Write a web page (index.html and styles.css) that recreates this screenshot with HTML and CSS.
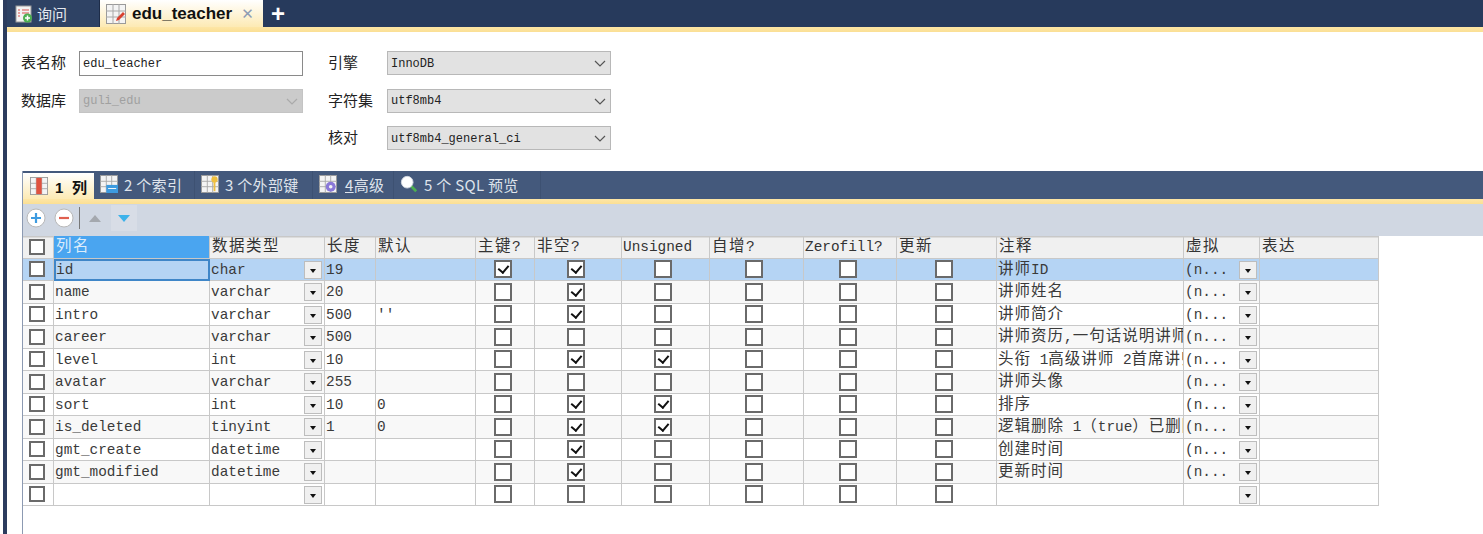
FILE: index.html
```html
<!DOCTYPE html>
<html lang="zh">
<head>
<meta charset="utf-8">
<title>edu_teacher</title>
<link rel="stylesheet" href="styles.css">
</head>
<body>
<svg class="defs" width="0" height="0">
  <symbol id="tbl" viewBox="0 0 20 20">
    <rect x="0.5" y="0.5" width="19" height="19" fill="#f4f4f4" stroke="#9a9a9a"/>
    <path d="M0 7h20M0 13h20M7 0v20M13 0v20" stroke="#a8a8a8" fill="none"/>
  </symbol>
</svg>
<div class="window">
  <div class="tabs">
    <div class="tab">
      <svg class="ic" viewBox="0 0 18 18"><rect x="1" y="1" width="15" height="16" fill="#f2f2f2" stroke="#999"/><path d="M3 5h2M7 5h7M3 8h2M7 8h7M3 11h2" stroke="#d9534f" fill="none"/><circle cx="12.5" cy="13" r="4.5" fill="#4caf50"/><path d="M12.5 10.500v5M10 13h5" stroke="#fff" stroke-width="1.500"/></svg>
      <span>询问</span>
    </div>
    <div class="tab active">
      <svg class="ic wide" viewBox="0 0 20 20"><use href="#tbl"/><path d="M10 17l1-3 6-6 2 2-6 6z" fill="#d8402f"/></svg>
      <span class="tab-name">edu_teacher</span>
      <span class="tab-x">✕</span>
    </div>
    <div class="tab-add">+</div>
  </div>
  <div class="strip"></div>

  <div class="form">
    <label>表名称</label>
    <div class="input">edu_teacher</div>
    <label class="l2">引擎</label>
    <div class="select">InnoDB<svg class="chev" viewBox="0 0 12 7"><path d="M1 1l5 5 5-5" fill="none" stroke="#555" stroke-width="1.200"/></svg></div>
    <label>数据库</label>
    <div class="select off">guli_edu<svg class="chev" viewBox="0 0 12 7"><path d="M1 1l5 5 5-5" fill="none" stroke="#aaa" stroke-width="1.200"/></svg></div>
    <label class="l2">字符集</label>
    <div class="select">utf8mb4<svg class="chev" viewBox="0 0 12 7"><path d="M1 1l5 5 5-5" fill="none" stroke="#555" stroke-width="1.200"/></svg></div>
    <span></span><span></span>
    <label class="l2">核对</label>
    <div class="select">utf8mb4_general_ci<svg class="chev" viewBox="0 0 12 7"><path d="M1 1l5 5 5-5" fill="none" stroke="#555" stroke-width="1.200"/></svg></div>
  </div>

  <div class="panel">
    <div class="ptabs">
      <div class="ptab active">
        <svg class="pic" viewBox="0 0 20 20"><use href="#tbl"/><rect x="7" y="1" width="6" height="18" fill="#e0523f"/></svg>
        <b>1 列</b>
      </div>
      <div class="ptab">
        <svg class="pic" viewBox="0 0 20 20"><use href="#tbl"/><rect x="7" y="11" width="13" height="9" fill="#3d9be0"/><path d="M9 15h9" stroke="#fff"/></svg>
        <span>2 个索引</span>
      </div>
      <div class="ptab">
        <svg class="pic" viewBox="0 0 20 20"><use href="#tbl"/><circle cx="15" cy="5" r="3.500" fill="#f0c040"/><path d="M15 8v10" stroke="#f0c040" stroke-width="2"/></svg>
        <span>3 个外部键</span>
      </div>
      <div class="ptab">
        <svg class="pic" viewBox="0 0 20 20"><use href="#tbl"/><circle cx="13" cy="13" r="5.500" fill="#8a78d8"/><circle cx="13" cy="13" r="2" fill="#f4f4f4"/></svg>
        <span><u>4</u>高级</span>
      </div>
      <div class="ptab">
        <svg class="pic" viewBox="0 0 20 20"><path d="M12 12l6 6" stroke="#4caf50" stroke-width="3"/><circle cx="8" cy="8" r="6.500" fill="#fff"/><circle cx="8" cy="8" r="6.500" fill="none" stroke="#cfd6e0"/></svg>
        <span>5 个 SQL 预览</span>
      </div>
    </div>
    <div class="strip small"></div>
    <div class="tools">
      <svg class="tool" viewBox="0 0 20 20"><circle cx="10" cy="10" r="9" fill="#fff" stroke="#b8b8b8"/><path d="M10 5v10M5 10h10" stroke="#3d9be0" stroke-width="2.200"/></svg>
      <svg class="tool" viewBox="0 0 20 20"><circle cx="10" cy="10" r="9" fill="#fff" stroke="#b8b8b8"/><path d="M5 10h10" stroke="#e0604f" stroke-width="2.200"/></svg>
      <span class="sep"></span>
      <span class="tbtn"><span class="up"></span></span>
      <span class="tbtn shade"><span class="down"></span></span>
    </div>
    <div class="grid">
      <div class="row head">
        <div class="c"><span class="cb"></span></div>
        <div class="t zh sel-h">列名</div><div class="t zh">数据类型</div><div class="t zh">长度</div><div class="t zh">默认</div>
        <div class="t zh">主键<span class="en">?</span></div><div class="t zh">非空<span class="en">?</span></div><div class="t">Unsigned</div><div class="t zh">自增<span class="en">?</span></div><div class="t">Zerofill?</div><div class="t zh">更新</div><div class="t zh">注释</div><div class="t zh">虚拟</div><div class="t zh">表达</div>
      </div>
      <div class="row cur">
        <div class="c"><span class="cb"></span></div>
        <div class="t focus">id</div><div class="t dd">char<i></i></div><div class="t">19</div><div class="t"></div>
        <div class="c"><span class="cb on"></span></div><div class="c"><span class="cb on"></span></div><div class="c"><span class="cb"></span></div><div class="c"><span class="cb"></span></div><div class="c"><span class="cb"></span></div><div class="c"><span class="cb"></span></div>
        <div class="t zh">讲师<span class="en">ID</span></div><div class="t dd">(n...<i></i></div><div class="t"></div>
      </div>
      <div class="row alt">
        <div class="c"><span class="cb"></span></div>
        <div class="t">name</div><div class="t dd">varchar<i></i></div><div class="t">20</div><div class="t"></div>
        <div class="c"><span class="cb"></span></div><div class="c"><span class="cb on"></span></div><div class="c"><span class="cb"></span></div><div class="c"><span class="cb"></span></div><div class="c"><span class="cb"></span></div><div class="c"><span class="cb"></span></div>
        <div class="t zh">讲师姓名</div><div class="t dd">(n...<i></i></div><div class="t"></div>
      </div>
      <div class="row">
        <div class="c"><span class="cb"></span></div>
        <div class="t">intro</div><div class="t dd">varchar<i></i></div><div class="t">500</div><div class="t">''</div>
        <div class="c"><span class="cb"></span></div><div class="c"><span class="cb on"></span></div><div class="c"><span class="cb"></span></div><div class="c"><span class="cb"></span></div><div class="c"><span class="cb"></span></div><div class="c"><span class="cb"></span></div>
        <div class="t zh">讲师简介</div><div class="t dd">(n...<i></i></div><div class="t"></div>
      </div>
      <div class="row alt">
        <div class="c"><span class="cb"></span></div>
        <div class="t">career</div><div class="t dd">varchar<i></i></div><div class="t">500</div><div class="t"></div>
        <div class="c"><span class="cb"></span></div><div class="c"><span class="cb"></span></div><div class="c"><span class="cb"></span></div><div class="c"><span class="cb"></span></div><div class="c"><span class="cb"></span></div><div class="c"><span class="cb"></span></div>
        <div class="t zh">讲师资历<span class="en">,</span>一句话说明讲师</div><div class="t dd">(n...<i></i></div><div class="t"></div>
      </div>
      <div class="row">
        <div class="c"><span class="cb"></span></div>
        <div class="t">level</div><div class="t dd">int<i></i></div><div class="t">10</div><div class="t"></div>
        <div class="c"><span class="cb"></span></div><div class="c"><span class="cb on"></span></div><div class="c"><span class="cb on"></span></div><div class="c"><span class="cb"></span></div><div class="c"><span class="cb"></span></div><div class="c"><span class="cb"></span></div>
        <div class="t zh">头衔<span class="en"> 1</span>高级讲师<span class="en"> 2</span>首席讲师</div><div class="t dd">(n...<i></i></div><div class="t"></div>
      </div>
      <div class="row alt">
        <div class="c"><span class="cb"></span></div>
        <div class="t">avatar</div><div class="t dd">varchar<i></i></div><div class="t">255</div><div class="t"></div>
        <div class="c"><span class="cb"></span></div><div class="c"><span class="cb"></span></div><div class="c"><span class="cb"></span></div><div class="c"><span class="cb"></span></div><div class="c"><span class="cb"></span></div><div class="c"><span class="cb"></span></div>
        <div class="t zh">讲师头像</div><div class="t dd">(n...<i></i></div><div class="t"></div>
      </div>
      <div class="row">
        <div class="c"><span class="cb"></span></div>
        <div class="t">sort</div><div class="t dd">int<i></i></div><div class="t">10</div><div class="t">0</div>
        <div class="c"><span class="cb"></span></div><div class="c"><span class="cb on"></span></div><div class="c"><span class="cb on"></span></div><div class="c"><span class="cb"></span></div><div class="c"><span class="cb"></span></div><div class="c"><span class="cb"></span></div>
        <div class="t zh">排序</div><div class="t dd">(n...<i></i></div><div class="t"></div>
      </div>
      <div class="row alt">
        <div class="c"><span class="cb"></span></div>
        <div class="t">is_deleted</div><div class="t dd">tinyint<i></i></div><div class="t">1</div><div class="t">0</div>
        <div class="c"><span class="cb"></span></div><div class="c"><span class="cb on"></span></div><div class="c"><span class="cb on"></span></div><div class="c"><span class="cb"></span></div><div class="c"><span class="cb"></span></div><div class="c"><span class="cb"></span></div>
        <div class="t zh">逻辑删除<span class="en"> 1</span>（<span class="en">true</span>）已删除</div><div class="t dd">(n...<i></i></div><div class="t"></div>
      </div>
      <div class="row">
        <div class="c"><span class="cb"></span></div>
        <div class="t">gmt_create</div><div class="t dd">datetime<i></i></div><div class="t"></div><div class="t"></div>
        <div class="c"><span class="cb"></span></div><div class="c"><span class="cb on"></span></div><div class="c"><span class="cb"></span></div><div class="c"><span class="cb"></span></div><div class="c"><span class="cb"></span></div><div class="c"><span class="cb"></span></div>
        <div class="t zh">创建时间</div><div class="t dd">(n...<i></i></div><div class="t"></div>
      </div>
      <div class="row alt">
        <div class="c"><span class="cb"></span></div>
        <div class="t">gmt_modified</div><div class="t dd">datetime<i></i></div><div class="t"></div><div class="t"></div>
        <div class="c"><span class="cb"></span></div><div class="c"><span class="cb on"></span></div><div class="c"><span class="cb"></span></div><div class="c"><span class="cb"></span></div><div class="c"><span class="cb"></span></div><div class="c"><span class="cb"></span></div>
        <div class="t zh">更新时间</div><div class="t dd">(n...<i></i></div><div class="t"></div>
      </div>
      <div class="row">
        <div class="c"><span class="cb"></span></div>
        <div class="t"></div><div class="t dd"><i></i></div><div class="t"></div><div class="t"></div>
        <div class="c"><span class="cb"></span></div><div class="c"><span class="cb"></span></div><div class="c"><span class="cb"></span></div><div class="c"><span class="cb"></span></div><div class="c"><span class="cb"></span></div><div class="c"><span class="cb"></span></div>
        <div class="t"></div><div class="t dd"><i></i></div><div class="t"></div>
      </div>
    </div>
  </div>
</div>
</body>
</html>
```

FILE: styles.css
```css
* { box-sizing: border-box; }
html, body { margin: 0; height: 100%; }
body {
  width: 1483px; height: 534px; overflow: hidden; background: #fff;
  padding-left: 3px;
  font-family: "Liberation Mono", "Noto Sans CJK SC", monospace;
  color: #333;
}
.defs { display: block; height: 0; }
.window {
  height: 534px; border-left: 4px solid #2c3c5e; background: #fff; overflow: hidden;
}
.tabs {
  display: flex; height: 27px; background: #273a5c; align-items: flex-end;
  font-family: "Noto Sans CJK SC", "Liberation Sans", sans-serif;
}
.tab {
  display: flex; align-items: center; gap: 4px; height: 27px; padding-left: 8px; width: 93px;
  color: #e4e8ee; font-size: 15px; background: #2e4264; border-right: 1px solid #1d2c48;
}
.tab.active {
  width: 163px; padding-left: 6px; gap: 6px; color: #111; border: 0;
  background: linear-gradient(#ffffff, #fdeab4);
}
.ic { width: 18px; height: 18px; flex: none; }
.ic.wide { width: 20px; height: 20px; }
.tab-name { font: bold 17px "Liberation Sans", sans-serif; }
.tab-x { color: #8f9cb4; font: bold 15px "DejaVu Sans", sans-serif; margin-left: 3px; }
.tab-add { color: #fff; font: bold 24px/27px "Liberation Sans", sans-serif; margin-left: 8px; }
.strip { height: 5px; background: linear-gradient(#fde6a6, #fbdf94); }
.form {
  display: grid; margin: 19px 0 0 14px;
  grid-template-columns: 58px 224px 25px 59px 224px;
  grid-template-rows: repeat(3, 24px); row-gap: 13.5px; align-items: center;
}
.form label { font: 15px/22px "Noto Sans CJK SC", sans-serif; color: #222; grid-column: 1; margin-bottom: 2px; }
.form .l2 { grid-column: 4; }
.input, .select {
  height: 24px; font-size: 12px; line-height: 22px; padding: 1px 0 0 3px; color: #222;
  border: 1px solid #a8a8a8; display: flex; align-items: center; justify-content: space-between;
}
.input { background: #fff; grid-column: 2; height: 25px; border-color: #8a8a8a; }
.select { background: #e2e2e2; padding-right: 4px; border-color: #b8b8b8; }
.form .select:not(.off) { grid-column: 5; }
.select.off { background: #cbcbcb; color: #a0a0a0; border-color: #c4c4c4; grid-column: 2; }
.chev { width: 12px; height: 7px; }
.panel {
  margin: 21px 0 0 15px; border-left: 1px solid #8c9ab2; height: 400px;
}
.ptabs {
  display: grid; grid-template-columns: 71px 101px 118px 81px 147px; height: 28px; background: #44597c;
  font: 15px "Noto Sans CJK SC", "Liberation Sans", sans-serif; color: #dfe4ec; letter-spacing: .3px;
}
.ptab {
  display: flex; align-items: center; gap: 6px; padding: 0 0 2px 6px; white-space: nowrap;
  border-right: 1px solid #3d5172;
}
.ptab:nth-child(4) { gap: 8px; }
.ptab.active {
  background: linear-gradient(#ffffff, #fdeab4); color: #111; margin-top: 2px; border: 0; padding: 0 0 0 7px; gap: 7px;
}
.ptab.active b { font-family: "Liberation Sans", "Noto Sans CJK SC", sans-serif; word-spacing: 4px; }
.pic { width: 18px; height: 18px; flex: none; }
.strip.small { height: 5px; }
.tools {
  display: flex; align-items: center; height: 32px; background: #d0d7e2; padding: 0 0 4px 3px; gap: 8px;
}
.tool { width: 20px; height: 20px; flex: none; }
.sep { width: 1px; height: 22px; background: #777; margin-left: -3px; }
.tbtn { display: flex; width: 26px; height: 26px; align-items: center; justify-content: center; margin-left: -6px; }
.tbtn.shade { background: #d8dde6; margin-left: -5px; }
.up, .down { width: 0; height: 0; border: 6px solid transparent; }
.up { border-bottom: 7px solid #a4a8ae; border-top: 0; }
.down { border-top: 7px solid #3db2ea; border-bottom: 0; }
.row {
  display: grid; height: 22.5px;
  grid-template-columns: 31px 156px 115px 51px 100px 59px 87px 88px 94px 93px 100px 187px 76px 119px;
  width: 1356px; font-size: 14.4px; line-height: 23px; background: #fff;
  box-shadow: inset -1px 0 0 #c4c4c4;
}
.alt { background: #f8f8f8; }
.cur { background: #b5d4f4; }
.head { background: #f0f0f0; box-shadow: inset 0 1.5px 0 #c8c8c8; }
.row > div { border-right: 1.5px solid #c8c8c8; border-bottom: 1.5px solid #c8c8c8; min-width: 0; }
.t { padding-left: 1px; white-space: nowrap; overflow: hidden; position: relative; color: #3a3a3a; }
.zh { font-size: 15.5px; letter-spacing: 1px; }
.head .zh { letter-spacing: 1.5px; padding-left: 2px; }
.en { font-size: 14.4px; letter-spacing: 0; }
.head .t { color: #333; }
.row > .sel-h { background: #4aa5f0; color: #dcecfb; }
.row > .focus { outline: 2px solid #3f86c8; outline-offset: -2px; padding-left: 2px; }
.c { display: flex; align-items: center; justify-content: center; padding-right: 5px; }
.cb {
  display: block; width: 18px; height: 18px; background: #fff; border: 2px solid #6a6a6a; position: relative;
}
.row > .c:first-child { padding-right: 3px; }
.row > .c:first-child .cb { width: 16px; height: 16px; }
.on::after {
  content: ""; position: absolute; left: 4px; top: 1px; width: 5px; height: 8px;
  border: solid #111; border-width: 0 2.5px 2.5px 0; transform: rotate(40deg);
}
.dd i {
  position: absolute; right: 2px; top: 2px; width: 18px; height: 18px;
  background: #f0f0f0; border: 1px solid #bdbdbd;
}
.dd i::after {
  content: ""; position: absolute; left: 5px; top: 7px; width: 0; height: 0;
  border: 3.5px solid transparent; border-top: 4px solid #111; border-bottom: 0;
}
```
